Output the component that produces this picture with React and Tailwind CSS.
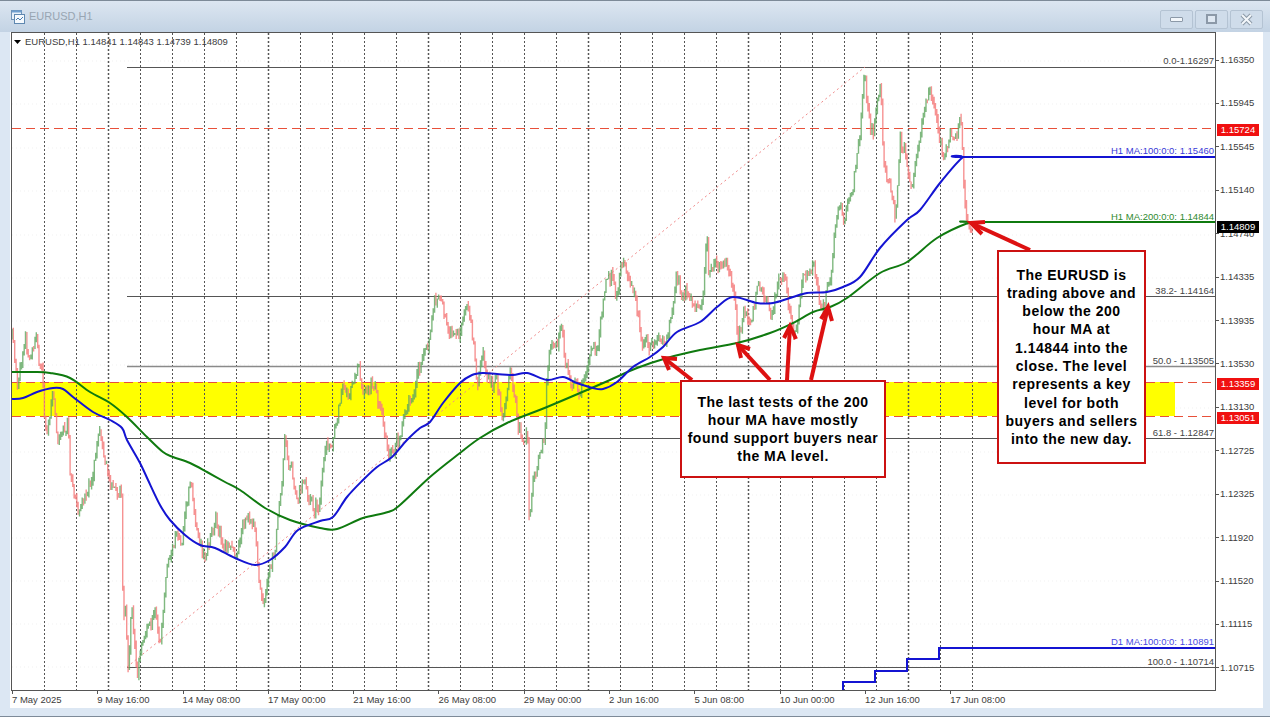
import React from "react";

const prices = ["1.16350","1.15945","1.15545","1.15140","1.14740","1.14335","1.13935","1.13530","1.13130","1.12725","1.12325","1.11920","1.11520","1.11115","1.10715"];
const times = ["7 May 2025","9 May 16:00","14 May 08:00","17 May 00:00","21 May 16:00","26 May 08:00","29 May 00:00","2 Jun 16:00","5 Jun 08:00","10 Jun 00:00","12 Jun 16:00","17 Jun 08:00"];

// close path of the price, traced in page pixels
const pricePath = [[12,337],[18,387],[25,338],[30,360],[37,348],[42,373],[45,430],[50,417],[53,385],[58,453],[68,417],[70,477],[78,515],[85,495],[93,470],[100,435],[106,465],[110,478],[116,490],[122,490],[123,620],[125,590],[128,667],[132,600],[137,673],[145,630],[155,612],[160,640],[167,560],[175,540],[182,545],[190,480],[198,535],[205,565],[215,520],[225,540],[235,560],[245,520],[255,530],[262,603],[268,585],[275,550],[285,440],[290,465],[298,490],[305,480],[313,505],[320,500],[322,473],[325,457],[330,443],[337,427],[342,387],[350,400],[358,373],[367,400],[372,383],[378,397],[383,430],[392,460],[400,440],[410,403],[417,373],[427,357],[435,300],[440,303],[448,340],[460,330],[467,313],[473,340],[477,377],[483,357],[487,390],[497,383],[503,417],[510,383],[520,430],[528,437],[529,515],[533,480],[540,450],[545,430],[547,367],[552,337],[557,350],[562,330],[565,367],[577,387],[580,403],[587,363],[597,353],[605,283],[612,273],[615,297],[623,260],[633,290],[643,340],[653,347],[660,330],[665,353],[670,320],[677,280],[683,297],[690,287],[697,307],[703,287],[707,217],[708,257],[712,277],[720,257],[727,273],[735,290],[738,337],[743,317],[748,323],[757,293],[763,280],[770,323],[778,287],[785,283],[790,317],[795,335],[800,290],[803,267],[817,273],[820,307],[827,293],[832,273],[835,233],[840,213],[843,228],[848,200],[856,165],[860,130],[863,90],[865,65],[867,113],[873,133],[881,83],[883,157],[895,217],[900,137],[912,177],[922,115],[930,83],[937,120],[940,147],[945,158],[950,137],[960,122],[963,157],[964,193],[967,223],[972,233]];

const blueMa = [[12,399],[23,398],[37,392],[53,388],[63,389],[73,397],[93,412],[110,420],[122,428],[127,440],[140,463],[148,480],[160,505],[170,520],[185,535],[200,545],[215,548],[235,558],[255,565],[270,560],[285,547],[298,530],[320,521],[333,517],[347,497],[363,480],[377,467],[392,457],[407,440],[420,428],[430,422],[443,403],[460,383],[472,375],[483,373],[497,374],[513,375],[527,373],[547,380],[563,377],[577,383],[593,388],[603,389],[617,382],[633,367],[650,357],[663,347],[677,332],[700,322],[717,307],[733,297],[757,303],[773,303],[790,298],[807,293],[827,292],[843,287],[860,277],[880,248],[907,220],[920,210],[940,183],[962,158],[972,157],[1215,157]];
const greenMa = [[12,372],[33,372],[50,373],[70,378],[90,392],[110,403],[127,417],[147,437],[163,452],[173,457],[190,463],[207,472],[225,482],[240,490],[265,508],[290,520],[320,528],[337,529],[363,518],[388,512],[400,505],[430,477],[460,453],[480,438],[507,423],[547,407],[587,390],[610,380],[637,368],[667,358],[700,350],[737,343],[770,333],[793,323],[813,312],[830,307],[847,298],[880,273],[907,262],[937,238],[968,223],[980,222],[1215,222]];
const dailyMa = [[843,690],[843,682],[875,682],[875,671],[907,671],[907,659],[939,659],[939,648],[1215,648]];

const toPoints = (list) => list.map((p) => p.join(",")).join(" ");

// smooth line through the traced points
function smoothPath(list) {
  let d = `M${list[0][0]} ${list[0][1]}`;
  for (let i = 0; i < list.length - 1; i++) {
    const p0 = list[Math.max(i - 1, 0)];
    const p1 = list[i];
    const p2 = list[i + 1];
    const p3 = list[Math.min(i + 2, list.length - 1)];
    const c1x = p1[0] + (p2[0] - p0[0]) / 6;
    const c1y = p1[1] + (p2[1] - p0[1]) / 6;
    const c2x = p2[0] - (p3[0] - p1[0]) / 6;
    const c2y = p2[1] - (p3[1] - p1[1]) / 6;
    d += `C${c1x.toFixed(1)} ${c1y.toFixed(1)} ${c2x.toFixed(1)} ${c2y.toFixed(1)} ${p2[0]} ${p2[1]}`;
  }
  return d;
}

function buildCandles() {
  let seed = 42;
  const rnd = () => {
    seed = (seed * 16807) % 2147483647;
    return seed / 2147483647 - 0.5;
  };
  let up = "";
  let down = "";
  let drift = 0;
  let open = pricePath[0][1];
  let seg = 0;
  for (let x = 12; x < 973; x += 1.35) {
    while (seg < pricePath.length - 2 && pricePath[seg + 1][0] < x) seg++;
    const [x0, y0] = pricePath[seg];
    const [x1, y1] = pricePath[seg + 1];
    const t = Math.min(1, (x - x0) / (x1 - x0));
    drift = drift * 0.55 + rnd() * 16;
    const close = y0 + (y1 - y0) * t + (x > 962 ? 0 : drift);
    const high = Math.min(open, close) - Math.abs(rnd()) * 10;
    const low = Math.max(open, close) + Math.abs(rnd()) * 10;
    const d = `M${x.toFixed(1)} ${high.toFixed(1)}V${low.toFixed(1)}`;
    if (close < open) up += d;
    else down += d;
    open = close;
  }
  return { up, down };
}

const candles = buildCandles();

const Arrow = ({ from, tip, barbs }) => (
  <g stroke="#dd1111" strokeWidth="4" fill="none">
    <line x1={from[0]} y1={from[1]} x2={tip[0]} y2={tip[1]} />
    <polyline points={toPoints([barbs[0], tip, barbs[1]])} />
  </g>
);

const ChartLabel = ({ top, color, children }) => (
  <span className={`absolute right-[1px] text-[9.5px] leading-[12px] whitespace-nowrap ${color}`} style={{ top }}>
    {children}
  </span>
);

const PriceTag = ({ top, color, children }) => (
  <span className={`absolute left-[1px] w-[42px] h-[12px] text-center text-[9.5px] leading-[12px] text-white ${color}`} style={{ top }}>
    {children}
  </span>
);

const WinButton = ({ children }) => (
  <div className="w-[33px] h-[19px] flex items-center justify-center rounded-[2px] border border-[#b4c3d3] bg-[#cfdcea]">
    {children}
  </div>
);

export default function App() {
  const verticals = [];
  for (let x = 44; x <= 972; x += 32) verticals.push(x);
  const gridY = [61, 104, 148, 191, 235, 278, 321, 365, 408, 452, 495, 538, 581, 624, 667];

  return (
    <div className="w-[1270px] h-[717px] overflow-hidden flex flex-col bg-[#dce7f3] font-['Liberation_Sans',Arial,sans-serif] text-[#3c3c3c] border-t border-b border-[#7d8a98]">
      <div className="h-[31px] shrink-0 flex items-center pl-[11px] pr-[7px] bg-gradient-to-b from-[#dce6f1] to-[#c3d3e4]">
        <svg width="14" height="15" viewBox="0 0 14 15" fill="none">
          <rect x="0.5" y="1.5" width="10" height="9" fill="#e8f1fa" stroke="#6f93b8" />
          <rect x="3.5" y="5.5" width="10" height="9" fill="#f6fafe" stroke="#5f88b0" />
          <path d="M1 1.5H10.5V3.5H1Z" fill="#6f9fd0" />
          <path d="M5 11l2-2 2 2 3-3" stroke="#4d7fb0" />
        </svg>
        <span className="ml-[4px] text-[11px] text-[#98a5b2]">EURUSD,H1</span>
        <div className="ml-auto flex gap-[2px] pt-[5px]">
          <WinButton>
            <div className="w-[13px] h-[5px] rounded-[1px] bg-[#f3f7fb] border border-[#8c99a8]" />
          </WinButton>
          <WinButton>
            <div className="w-[11px] h-[10px] bg-[#dfe8f2] border-2 border-[#8c99a8]" />
          </WinButton>
          <WinButton>
            <svg width="13" height="13" viewBox="0 0 13 13">
              <path d="M2 2L11 11M11 2L2 11" stroke="#8c99a8" strokeWidth="4" />
              <path d="M2 2L11 11M11 2L2 11" stroke="#f3f7fb" strokeWidth="2" />
            </svg>
          </WinButton>
        </div>
      </div>

      <div className="ml-[10px] mr-[7px] h-[676px] shrink-0 bg-white flex flex-col">
        <div className="flex h-[659px]">
          <div className="relative w-[1205px] ml-[1px] border border-[#555]">
            <svg className="absolute inset-0" width="1203" height="657" viewBox="12 33 1203 657">
              {gridY.map((y) => (
                <line key={y} x1="12" x2="1215" y1={y} y2={y} stroke="#f1f1f1" strokeDasharray="1 3" />
              ))}
              <rect x="12" y="382" width="1163" height="34" fill="#ffff00" />
              {verticals.map((x) => (
                <line key={x} x1={x + 0.5} x2={x + 0.5} y1="33" y2="690" stroke="#555" strokeDasharray="2 2" strokeWidth={(x - 108) % 160 === 0 ? 1.5 : 1} />
              ))}
              {[67, 296, 438, 667].map((y) => (
                <line key={y} x1="127" x2="1215" y1={y + 0.5} y2={y + 0.5} stroke="#555" />
              ))}
              <line x1="127" x2="1215" y1="366.5" y2="366.5" stroke="#8a8a8a" strokeWidth="1.3" />
              <line x1="127" y1="667" x2="865" y2="67" stroke="#f08a8a" strokeDasharray="2 3" />
              {[128, 382, 416].map((y) => (
                <line key={y} x1="12" x2="1215" y1={y + 0.5} y2={y + 0.5} stroke="#e8503a" strokeDasharray="9 5" />
              ))}
              <path d={candles.down} stroke="#f47f7f" strokeWidth="1.4" strokeOpacity="0.85" fill="none" />
              <path d={candles.up} stroke="#5fa65f" strokeWidth="1.4" strokeOpacity="0.8" fill="none" />
              <path d={smoothPath(greenMa)} fill="none" stroke="#0f7a0f" strokeWidth="2" />
              <path d={smoothPath(blueMa)} fill="none" stroke="#1414d2" strokeWidth="2" />
              <polyline points={toPoints(dailyMa)} fill="none" stroke="#1414d2" strokeWidth="2" />
              <Arrow from={[1030, 250]} tip={[971, 223]} barbs={[[985, 222], [982, 234]]} />
              <Arrow from={[692, 380]} tip={[664, 358]} barbs={[[677, 359], [669, 370]]} />
              <Arrow from={[770, 380]} tip={[738, 345]} barbs={[[750, 349], [741, 358]]} />
              <Arrow from={[787, 380]} tip={[790, 326]} barbs={[[784, 338], [796, 339]]} />
              <Arrow from={[811, 380]} tip={[828, 307]} barbs={[[821, 319], [832, 321]]} />
            </svg>

            <span className="absolute left-[2px] top-[3px] flex items-center gap-[4px] text-[9.5px] leading-[12px] whitespace-pre">
              <svg width="7" height="4" viewBox="0 0 7 4"><path d="M0 0H7L3.5 4Z" fill="#000" /></svg>
              EURUSD,H1 1.14841 1.14843 1.14739 1.14809
            </span>

            <ChartLabel top={22} color="text-[#444]">0.0-1.16297</ChartLabel>
            <ChartLabel top={112} color="text-[#3a3ad8]">H1 MA:100:0:0: 1.15460</ChartLabel>
            <ChartLabel top={178} color="text-[#2f8a2f]">H1 MA:200:0:0: 1.14844</ChartLabel>
            <ChartLabel top={252} color="text-[#444]">38.2- 1.14164</ChartLabel>
            <ChartLabel top={322} color="text-[#444]">50.0 - 1.13505</ChartLabel>
            <ChartLabel top={394} color="text-[#444]">61.8 - 1.12847</ChartLabel>
            <ChartLabel top={603} color="text-[#4a4ae0]">D1 MA:100:0:0: 1.10891</ChartLabel>
            <ChartLabel top={623} color="text-[#444]">100.0 - 1.10714</ChartLabel>

            <div className="absolute left-[668px] top-[347px] w-[206px] h-[98px] bg-white border-2 border-[#cc1111] flex items-center justify-center text-center text-[14px] leading-[18px] font-bold tracking-[0.5px] text-black">
              <p>The last tests of the 200<br />hour MA have mostly<br />found support buyers near<br />the MA level.</p>
            </div>
            <div className="absolute left-[985px] top-[217px] w-[149px] h-[214px] bg-white border-2 border-[#cc1111] flex items-center justify-center text-center text-[14px] leading-[18.3px] font-bold tracking-[0.5px] text-black">
              <p>The EURUSD is<br />trading above and<br />below the 200<br />hour MA at<br />1.14844 into the<br />close. The level<br />represents a key<br />level for both<br />buyers and sellers<br />into the new day.</p>
            </div>
          </div>

          <div className="relative flex-1">
            <div className="h-full flex flex-col justify-between pt-[22px] pb-[17px] text-[9.5px] leading-[12px]">
              {prices.map((p) => (
                <div key={p} className="flex items-center gap-[1px]">
                  <span className="w-[3px] h-px bg-[#555]" />
                  <span>{p}</span>
                </div>
              ))}
            </div>
            <PriceTag top={92} color="bg-[#f01010]">1.15724</PriceTag>
            <PriceTag top={189} color="bg-black">1.14809</PriceTag>
            <PriceTag top={346} color="bg-[#f01010]">1.13359</PriceTag>
            <PriceTag top={380} color="bg-[#f01010]">1.13051</PriceTag>
          </div>
        </div>

        <div className="ml-[2px] grid grid-cols-[repeat(12,85.3px)] h-[17px] text-[9.5px] leading-[12px]">
          {times.map((t) => (
            <div key={t} className="flex flex-col">
              <span className="w-px h-[3px] bg-[#555]" />
              <span className="whitespace-nowrap">{t}</span>
            </div>
          ))}
        </div>
      </div>
    </div>
  );
}
